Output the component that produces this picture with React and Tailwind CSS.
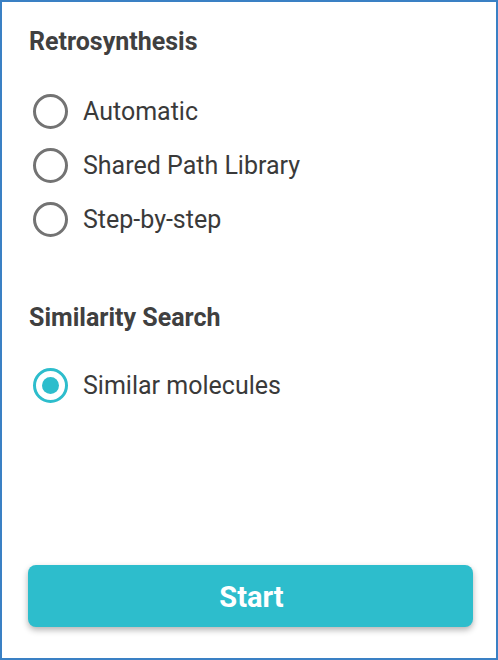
import React, { useState } from 'react';

const Radio = ({ label, checked, onClick }) => (
    <button onClick={onClick} className="flex items-center h-[54px] text-left">
        <span
            className={
                'flex items-center justify-center w-[35px] h-[35px] rounded-full border-[3px] ' +
                (checked ? 'border-[#2dbdcc]' : 'border-[#737373]')
            }
        >
            {checked && <span className="w-[17px] h-[17px] rounded-full bg-[#2dbdcc]" />}
        </span>
        <span className="ml-[15px] pt-[2px] text-[25px] text-[#3a3a3a] leading-[30px]">{label}</span>
    </button>
);

const App = () => {
    const [selected, setSelected] = useState('similar');

    return (
        <div
            className="w-[498px] h-[660px] border-2 border-[#3a80c4] bg-white flex flex-col px-[27px] pt-[25px] pb-[31px]"
            style={{ fontFamily: 'Roboto, "Liberation Sans", sans-serif' }}
        >
            <h2 className="text-[25px] leading-[30px] font-bold text-[#404040]">Retrosynthesis</h2>
            <div className="mt-[27px] flex flex-col pl-[4px]">
                <Radio label="Automatic" checked={selected === 'auto'} onClick={() => setSelected('auto')} />
                <Radio label="Shared Path Library" checked={selected === 'shared'} onClick={() => setSelected('shared')} />
                <Radio label="Step-by-step" checked={selected === 'step'} onClick={() => setSelected('step')} />
            </div>

            <h2 className="mt-[57px] text-[25px] leading-[30px] font-bold text-[#404040]">Similarity Search</h2>
            <div className="mt-[25px] flex flex-col pl-[4px]">
                <Radio label="Similar molecules" checked={selected === 'similar'} onClick={() => setSelected('similar')} />
            </div>

            <button className="mt-auto -ml-[1px] h-[62px] w-[445px] pt-[4px] pl-[2px] rounded-[8px] bg-[#2dbdcc] text-white text-[29px] font-bold shadow-[0_3px_6px_rgba(0,0,0,0.3)]">
                Start
            </button>
        </div>
    );
};

export default App;
